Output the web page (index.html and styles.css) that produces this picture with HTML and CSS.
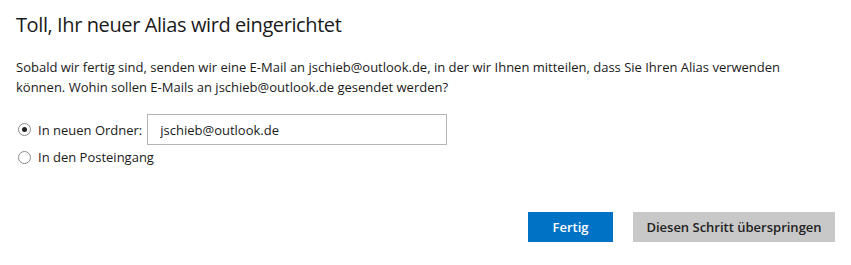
FILE: index.html
```html
<!DOCTYPE html>
<html lang="de">
<head>
    <meta charset="UTF-8">
    <title>Alias wird eingerichtet</title>
    <link rel="stylesheet" href="styles.css">
</head>
<body>
    <div class="alias-page">
        <h1 class="alias-title">Toll, Ihr neuer Alias wird eingerichtet</h1>
        <p class="alias-text">Sobald wir fertig sind, senden wir eine E-Mail an jschieb@outlook.de, in der wir Ihnen mitteilen, dass Sie Ihren Alias verwenden können. Wohin sollen E-Mails an jschieb@outlook.de gesendet werden?</p>

        <div class="options">
            <label class="option">
                <span class="radio checked"></span>
                <span>In neuen Ordner:</span>
                <input type="text" class="folder-input" value="jschieb@outlook.de">
            </label>
            <label class="option">
                <span class="radio"></span>
                <span>In den Posteingang</span>
            </label>
        </div>

        <div class="actions">
            <button class="btn btn-primary">Fertig</button>
            <button class="btn btn-secondary">Diesen Schritt überspringen</button>
        </div>
    </div>
</body>
</html>
```

FILE: styles.css
```css
:root {
    --text-color: #1a1a1a;
    --primary-color: #0072c6;
    --secondary-bg: #c8c8c8;
}

body {
    margin: 0;
    background: #fff;
    font-family: 'Open Sans', sans-serif;
    color: var(--text-color);
}

.alias-page {
    padding: 12px 16px 0 16px;
}

.alias-title {
    margin: 0;
    font-size: 20px;
    font-weight: 400;
    line-height: 26px;
    letter-spacing: -0.4px;
}

.alias-text {
    margin: 19px 0 0 0;
    font-size: 13px;
    line-height: 20px;
    width: 790px;
}

.options {
    margin-top: 17px;
    display: flex;
    flex-direction: column;
}

.option {
    display: flex;
    align-items: center;
    font-size: 13px;
    height: 24px;
}

.option:first-child {
    height: 31px;
}

.radio {
    width: 13px;
    height: 13px;
    border: 1px solid #8a8a8a;
    border-radius: 50%;
    margin: 0 7px 0 2px;
    box-sizing: border-box;
    display: flex;
    align-items: center;
    justify-content: center;
}

.radio.checked::after {
    content: '';
    width: 5px;
    height: 5px;
    border-radius: 50%;
    background: #222;
}

.folder-input {
    margin-left: 5px;
    width: 300px;
    height: 31px;
    box-sizing: border-box;
    border: 1px solid #b4b4b4;
    padding: 0 12px;
    font-family: 'Open Sans', sans-serif;
    font-size: 13px;
    color: var(--text-color);
}

.actions {
    margin-top: 43px;
    display: flex;
    justify-content: flex-end;
    gap: 20px;
}

.btn {
    height: 30px;
    border: none;
    font-family: 'Open Sans', sans-serif;
    font-size: 13px;
    font-weight: 600;
    padding: 0;
    cursor: pointer;
}

.btn-primary {
    width: 85px;
    background: var(--primary-color);
    color: #fff;
}

.btn-secondary {
    width: 202px;
    background: var(--secondary-bg);
    color: #222;
}
```
